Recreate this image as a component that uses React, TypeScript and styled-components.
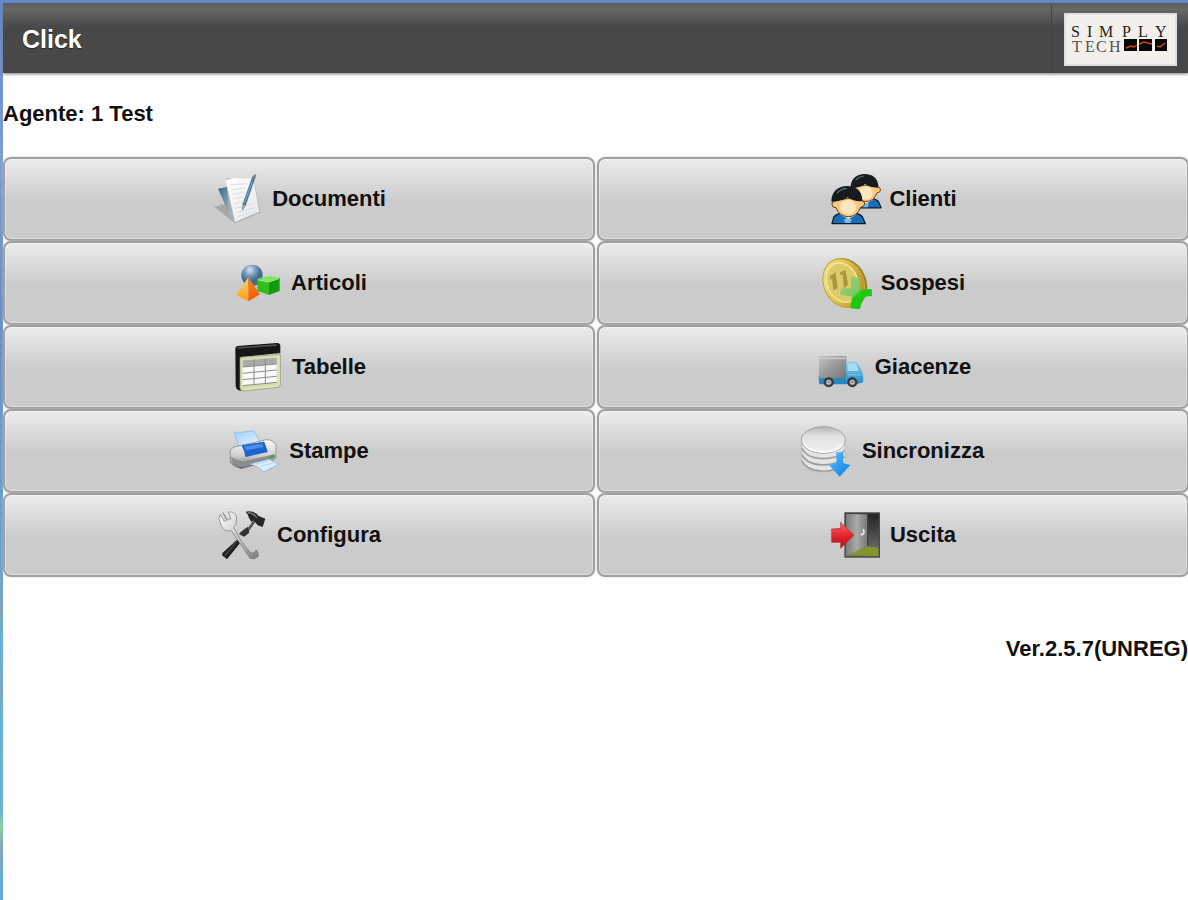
import React from "react";
import styled, { createGlobalStyle } from "styled-components";

const GlobalStyle = createGlobalStyle`
  * { box-sizing: border-box; }
  body {
    margin: 0;
    background: #fefefe;
    color: #111;
    font-family: "Liberation Sans", Arial, sans-serif;
    font-weight: bold;
  }
`;

const Desktop = styled.div`
  min-height: 100vh;
  padding: 3px 0 0 3px;
  overflow: hidden;
  background: linear-gradient(180deg, #6288cc 0, #7d9fd0 160px, #6b8fc4 300px, #6aa5cf 560px, #7fa3bd 610px, #62b2d8 640px, #7aa9c4 690px, #64b4d8 720px, #69b3d3 810px, #86d0a0 826px, #88a8b8 845px, #62add6 880px);
`;

const Page = styled.main`
  min-height: calc(100vh - 3px);
  background: #fefefe;
`;

const Header = styled.header`
  display: flex;
  align-items: center;
  justify-content: space-between;
  height: 70px;
  padding: 2px 11px 0 19px;
  background: linear-gradient(180deg, #5c5c5c 0, #686868 6px, #484848 24px, #484848 100%);
  box-shadow: 0 1px 3px #777;
`;

const Title = styled.h1`
  margin: 0;
  color: #fff;
  font-size: 25px;
  line-height: 30px;
  text-shadow: 0 1px 1px #222;
`;

const LogoArea = styled.div`
  display: flex;
  align-items: center;
  height: 100%;
  padding-left: 12px;
  border-left: 1px solid #424242;
`;

const LogoFrame = styled.div`
  width: 113px;
  height: 53px;
  border: 2px solid #dcdfe3;
  background: #f3efea;
`;

const Agent = styled.p`
  margin: 0;
  padding: 26px 0 28px;
  font-size: 22px;
  line-height: 30px;
`;

const Menu = styled.nav`
  display: grid;
  grid-template-columns: 1fr 1fr;
  column-gap: 2px;
  margin-right: -1px;
`;

const MenuButton = styled.button`
  display: flex;
  align-items: center;
  justify-content: center;
  gap: 10px;
  height: 84px;
  padding: 0;
  border: 2px solid #a0a0a0;
  border-radius: 8px;
  background: linear-gradient(180deg, #ececec 0, #d9d9d9 30%, #cbcbcb 52%, #cccccc 100%);
  box-shadow: inset 0 0 0 1px rgba(255, 255, 255, 0.35), 0 0 2px #c4c4c4;
  color: #111;
  font: inherit;
  font-size: 22px;
  line-height: 28px;
  cursor: pointer;
`;

const Icon = styled.svg`
  flex: none;
  width: 50px;
  height: 50px;
  overflow: visible;
`;

const Version = styled.p`
  margin: 0;
  padding-top: 57px;
  font-size: 22px;
  line-height: 30px;
  text-align: right;
`;

const Logo = () => (
  <LogoFrame>
    <svg width="109" height="49" viewBox="1066 16 109 49" role="img" aria-label="Simply Tech">
      <g fontFamily="Liberation Serif, serif" fontWeight="normal" fill="#222">
        <text fontSize="16" y="38" x="1071 1087 1099 1122 1138 1155">SIMPLY</text>
        <text fontSize="16" y="53" x="1072 1085 1096 1109" fill="#555">TECH</text>
      </g>
      <path d="M1124 40h13v12h-13zM1139 40h13v12h-13zM1155 40h12v12h-12z" fill="#080808" />
      <path d="M1126 49l5-2 3 1 3-2M1139 45l5-2 8 2M1157 47l3 1 5-4" fill="none" stroke="#d4421c" strokeWidth="1.5" />
    </svg>
  </LogoFrame>
);

const DocumentsIcon = () => (
  <Icon viewBox="35 27 150 150" aria-hidden="true">
    <defs>
      <linearGradient id="docPaper" x2="1" y2="1"><stop stopColor="#fff" /><stop offset="1" stopColor="#e3e8ec" /></linearGradient>
      <linearGradient id="docBack" x2="1" y2="1"><stop stopColor="#3c6484" /><stop offset="1" stopColor="#a8bfcf" /></linearGradient>
    </defs>
    <path d="M42 126l40-12 22 60z" fill="#888" opacity=".55" />
    <path d="M53 71l29-6 10 94z" fill="url(#docBack)" />
    <path d="M78 40l82 3 20 100-76 32-16-12z" fill="#a9b0b5" />
    <path d="M76 45l25-6 58 2 18 99-73 31z" fill="url(#docPaper)" />
    <path d="M88 60l50-4M92 74l42-5M94 88l38-6M97 102l31-6M101 116l24-5M105 130l54-14M108 144l54-16M111 155l53-17" stroke="#cbd1d5" strokeWidth="2" />
    <path d="M157 34l8 2-29 85-10 15 1-18z" fill="#527c9d" stroke="#355a76" strokeWidth="1" />
    <path d="M161 29q5-4 7 2l-3 7-8-3z" fill="#b56f63" />
    <path d="M127 119l8 2-9 15z" fill="#c9a989" />
    <path d="M155 51l-23 63" stroke="#91b6ce" strokeWidth="2" />
  </Icon>
);

const ShapesIcon = () => (
  <Icon viewBox="93 279 150 150" aria-hidden="true">
    <defs>
      <radialGradient id="ball" cx=".4" cy=".25"><stop stopColor="#dbe7f0" /><stop offset=".5" stopColor="#7f9fbd" /><stop offset="1" stopColor="#426b92" /></radialGradient>
      <linearGradient id="pyrL" x2="0" y2="1"><stop stopColor="#ffd27a" /><stop offset="1" stopColor="#ff9d12" /></linearGradient>
      <linearGradient id="pyrR" x2="0" y2="1"><stop stopColor="#ff8619" /><stop offset="1" stopColor="#e95b05" /></linearGradient>
    </defs>
    <circle cx="156" cy="331" r="32" fill="url(#ball)" />
    <path d="M145 337l-36 54 36 18z" fill="url(#pyrL)" />
    <path d="M145 337l35 51-35 21z" fill="url(#pyrR)" />
    <path d="M172 342l37-10 30 7-32 10z" fill="#7ee85a" />
    <path d="M172 342l35 7v41l-35-12z" fill="#35bd20" />
    <path d="M207 349l32-10v39l-32 12z" fill="#129c0c" />
    <path d="M174 344l32 7 30-10" fill="none" stroke="#b5f39c" strokeWidth="3" />
  </Icon>
);

const TableIcon = () => (
  <Icon viewBox="95 36 150 150" aria-hidden="true">
    <path d="M105 57q0-8 8-9l117-9q10 0 10 10v20l-118 12v102q-15-3-16-14z" fill="#161616" />
    <path d="M111 54l119-9" stroke="#555" strokeWidth="4" />
    <path d="M119 82l121-9v90q0 8-9 9l-101 11q-11 0-11-9z" fill="#d7dcac" stroke="#8d9168" strokeWidth="2" />
    <path d="M127 91l102-8v74l-102 10z" fill="#fafafa" />
    <path d="M127 91l102-8v19l-102 9z" fill="#aaa" />
    <path d="M127 111l102-9M127 130l102-10M127 149l102-10M127 167l102-10M161 88v76M195 85v76" stroke="#8d8d8d" strokeWidth="3" />
    <path d="M236 78v84q0 6-7 7l-98 10" fill="none" stroke="#f4f5db" strokeWidth="2" />
  </Icon>
);

const PrinterIcon = () => (
  <Icon viewBox="87 288 150 150" aria-hidden="true">
    <defs>
      <linearGradient id="prBody" x2="0" y2="1"><stop stopColor="#fafafa" /><stop offset=".55" stopColor="#cfd0d2" /><stop offset="1" stopColor="#666" /></linearGradient>
      <linearGradient id="prPaper" x2="1" y2="1"><stop stopColor="#9bccff" /><stop offset="1" stopColor="#edf7ff" /></linearGradient>
    </defs>
    <path d="M102 307q25 2 60-5l20 39-65 10z" fill="url(#prPaper)" stroke="#85b2e0" strokeWidth="2" />
    <path d="M91 365q1-12 16-15l92-21q20 0 29 16v36q-1 8-15 11l-90 24q-29-8-32-22z" fill="url(#prBody)" stroke="#777" strokeWidth="2" />
    <path d="M93 379q18 18 43 14l88-20v10l-100 29q-26-5-31-33z" fill="#8a8c8e" />
    <path d="M126 347l66-11 10 29-65 15q-1-18-11-33z" fill="#1e63d2" stroke="#1854aa" strokeWidth="2" />
    <path d="M132 350l55-9 4 10-53 10z" fill="#4c8eee" />
    <path d="M149 402l57-14 31 14-46 24q-10-15-42-24z" fill="#dceeff" stroke="#7fa8d2" strokeWidth="2" />
    <path d="M167 403l39-9M180 409l39-10" stroke="#a7c7e6" strokeWidth="2" />
    <path d="M211 378l13-4v8l-13 4z" fill="#48a334" />
  </Icon>
);

const ToolsIcon = () => (
  <Icon viewBox="50 60 150 150" aria-hidden="true">
    <defs>
      <linearGradient id="wrench" x2="1" y2="1"><stop stopColor="#fff" /><stop offset=".6" stopColor="#bbb" /><stop offset="1" stopColor="#777" /></linearGradient>
    </defs>
    <path d="M165 90l-34 46" stroke="#555" strokeWidth="8" />
    <path d="M122 125l20-15 5 18-16 12-15-8z" fill="#333" />
    <path d="M136 65q24-5 39 13l20 8-8 25-15-5-12-15-7 5-8-14q-2-9-9-17z" fill="#262626" />
    <path d="M142 68q17 0 27 15" fill="none" stroke="#888" strokeWidth="4" />
    <path d="M110 149l10 9-40 50-15-12 2-8z" fill="#222" />
    <path d="M109 154l-35 42" stroke="#606060" strokeWidth="3" />
    <path d="M68 68l14 22 10-4-8-20q20-2 25 16l-2 22-7 8q14 32 42 66 8 12 17 11 6-2 8-10 9 8 7 20-10 11-24 7l-47-69-10-15q-20 5-30-14l-7-22 4-13 11 21 8-3z" fill="url(#wrench)" stroke="#777" strokeWidth="2" />
  </Icon>
);

const Person = ({ transform }: { transform?: string }) => (
  <g transform={transform} stroke="#111a22" strokeWidth="4" strokeLinejoin="round">
    <path d="M96 176l6-21q12-12 43-12t42 12l9 21z" fill="#146fbd" />
    <path d="M121 149l24 14 24-14-5-16h-38z" fill="#ffe2bd" stroke="none" />
    <path d="M132 162h23l-4 12h-16z" fill="#72bff2" stroke="none" />
    <path d="M96 119q-1-8 7-10 42-16 82-2 10 2 9 10-2 9-12 10-10 28-37 28t-37-27q-12 0-12-9z" fill="#ffc77e" stroke="#5a3d22" strokeWidth="3" />
    <ellipse cx="144" cy="127" rx="24" ry="22" fill="#fff0d5" stroke="none" opacity=".75" />
    <path d="M96 108q2-39 42-43 45 0 47 41-18 3-43-12-9 12-46 14z" fill="#171b1c" />
    <path d="M111 84q12-13 29-14" stroke="#65767c" fill="none" strokeWidth="4" />
  </g>
);

const ClientsIcon = () => (
  <Icon viewBox="87 27 150 150" aria-hidden="true">
    <Person transform="translate(67 -30) scale(.9)" />
    <Person />
  </Icon>
);

const CoinIcon = () => (
  <Icon viewBox="62 279 150 150" aria-hidden="true">
    <defs>
      <linearGradient id="coin" x2="1" y2="1"><stop stopColor="#f7eda4" /><stop offset=".5" stopColor="#d9bf4b" /><stop offset="1" stopColor="#a08313" /></linearGradient>
      <linearGradient id="plus" x2="1" y2="1"><stop stopColor="#8ccc82" stopOpacity=".65" /><stop offset=".5" stopColor="#7bca65" /><stop offset=".56" stopColor="#22ce15" /><stop offset="1" stopColor="#16ac0b" /></linearGradient>
    </defs>
    <ellipse cx="137" cy="354" rx="61" ry="77" transform="rotate(-23 137 354)" fill="#9b832a" />
    <ellipse cx="130" cy="354" rx="60" ry="75" transform="rotate(-23 130 354)" fill="url(#coin)" stroke="#c3a73a" strokeWidth="3" />
    <ellipse cx="127" cy="353" rx="46" ry="61" transform="rotate(-23 127 353)" fill="#dfca6a" stroke="#f4e797" strokeWidth="4" />
    <path d="M89 334l17-12 6 48-13 6-4-35-5 3zM119 322l17-7 7 45-12 10-4-41-6 2z" fill="#9c8934" opacity=".8" />
    <path d="M151 334l28 5v35h35v19l-24 2-13 37-27-2 5-35-37-7 5-18h29z" fill="url(#plus)" />
    <path d="M177 395q10-22 36-23l1 21q-17-2-26 6l-9 32-26-3 5-32z" fill="#1cc812" />
  </Icon>
);

const TruckIcon = () => (
  <Icon viewBox="73 36 150 150" aria-hidden="true">
    <defs>
      <linearGradient id="cargo" x2="1" y2="1"><stop stopColor="#c5c5c5" /><stop offset=".5" stopColor="#999" /><stop offset="1" stopColor="#777" /></linearGradient>
      <linearGradient id="cab" x2="0" y2="1"><stop stopColor="#8fcee9" /><stop offset="1" stopColor="#238ac4" /></linearGradient>
    </defs>
    <path d="M83 139h84v24H86z" fill="#2589bf" />
    <path d="M85 78h82v66H85z" fill="url(#cargo)" />
    <path d="M85 85h80" stroke="#c8c8c8" strokeWidth="5" />
    <path d="M166 95h30q8 2 10 13l9 20q5 14 2 29l-17 5h-34z" fill="url(#cab)" />
    <path d="M171 100h25l8 23h-33z" fill="#a7ddeb" />
    <path d="M172 134h40" stroke="#5dbaf0" strokeWidth="6" />
    {[114, 185].map((x) => (
      <g key={x}>
        <circle cx={x} cy="157" r="15" fill="#303438" />
        <circle cx={x} cy="157" r="8" fill="#d5d8da" stroke="#777" strokeWidth="3" />
        <circle cx={x} cy="157" r="3" fill="#555" />
      </g>
    ))}
  </Icon>
);

const SyncIcon = () => (
  <Icon viewBox="34 288 150 150" aria-hidden="true">
    <defs>
      <linearGradient id="disk" x2="0" y2="1"><stop stopColor="#b4b4b4" /><stop offset=".35" stopColor="#e2e2e2" /><stop offset="1" stopColor="#f0f0f0" /></linearGradient>
      <linearGradient id="down" x2="1" y2="1"><stop stopColor="#57bdff" /><stop offset="1" stopColor="#087ddf" /></linearGradient>
    </defs>
    {[58, 39, 20].map((y) => (
      <g key={y}>
        <ellipse cx="98" cy={331 + y} rx="66" ry="37" fill="#e4e4e4" stroke="#b4b4b4" strokeWidth="2" />
        <path d={`M33 ${334 + y}q15 29 57 31 50 3 71-24`} fill="none" stroke="#999" strokeWidth="4" />
      </g>
    ))}
    <ellipse cx="98" cy="330" rx="66" ry="40" fill="url(#disk)" stroke="#a4a4a4" strokeWidth="3" />
    <path d="M40 341q12 23 57 25 47 0 60-25" fill="none" stroke="#fff" strokeWidth="4" />
    <path d="M137 367h21v33l21 5-32 35-32-35 22-5z" fill="url(#down)" />
  </Icon>
);

const ExitIcon = () => (
  <Icon viewBox="90 60 150 150" aria-hidden="true">
    <defs>
      <linearGradient id="door" x2="1"><stop stopColor="#7b7b7b" /><stop offset=".5" stopColor="#aaa" /><stop offset="1" stopColor="#777" /></linearGradient>
      <linearGradient id="night" x2="0" y2="1"><stop stopColor="#202020" /><stop offset="1" stopColor="#777" /></linearGradient>
      <linearGradient id="exitArrow" x2="0" y2="1"><stop stopColor="#f86b6b" /><stop offset=".5" stopColor="#e32630" /><stop offset="1" stopColor="#b90d15" /></linearGradient>
    </defs>
    <path d="M135 69h103v132H135z" fill="url(#night)" />
    <path d="M142 195l60-26 34 4v26z" fill="#849428" />
    <path d="M138 72l65 1v95l-65 29z" fill="url(#door)" />
    <path d="M203 74v94" stroke="#444" strokeWidth="4" />
    <path d="M189 118q7 8-2 16l-5-2" fill="none" stroke="#eee" strokeWidth="5" />
    <path d="M135 69h103v132H135z" fill="none" stroke="#4b4b4b" strokeWidth="4" />
    <path d="M95 117l27-2V97l40 39-40 39v-18H95z" fill="url(#exitArrow)" stroke="#b52b30" strokeWidth="2" />
  </Icon>
);

const entries = [
  { label: "Documenti", Glyph: DocumentsIcon },
  { label: "Clienti", Glyph: ClientsIcon },
  { label: "Articoli", Glyph: ShapesIcon },
  { label: "Sospesi", Glyph: CoinIcon },
  { label: "Tabelle", Glyph: TableIcon },
  { label: "Giacenze", Glyph: TruckIcon },
  { label: "Stampe", Glyph: PrinterIcon },
  { label: "Sincronizza", Glyph: SyncIcon },
  { label: "Configura", Glyph: ToolsIcon },
  { label: "Uscita", Glyph: ExitIcon },
];

export default function App() {
  return (
    <>
      <GlobalStyle />
      <Desktop>
        <Page>
          <Header>
            <Title>Click</Title>
            <LogoArea>
              <Logo />
            </LogoArea>
          </Header>
          <Agent>Agente: 1 Test</Agent>
          <Menu>
            {entries.map(({ label, Glyph }) => (
              <MenuButton key={label} type="button">
                <Glyph />
                {label}
              </MenuButton>
            ))}
          </Menu>
          <Version>Ver.2.5.7(UNREG)</Version>
        </Page>
      </Desktop>
    </>
  );
}
